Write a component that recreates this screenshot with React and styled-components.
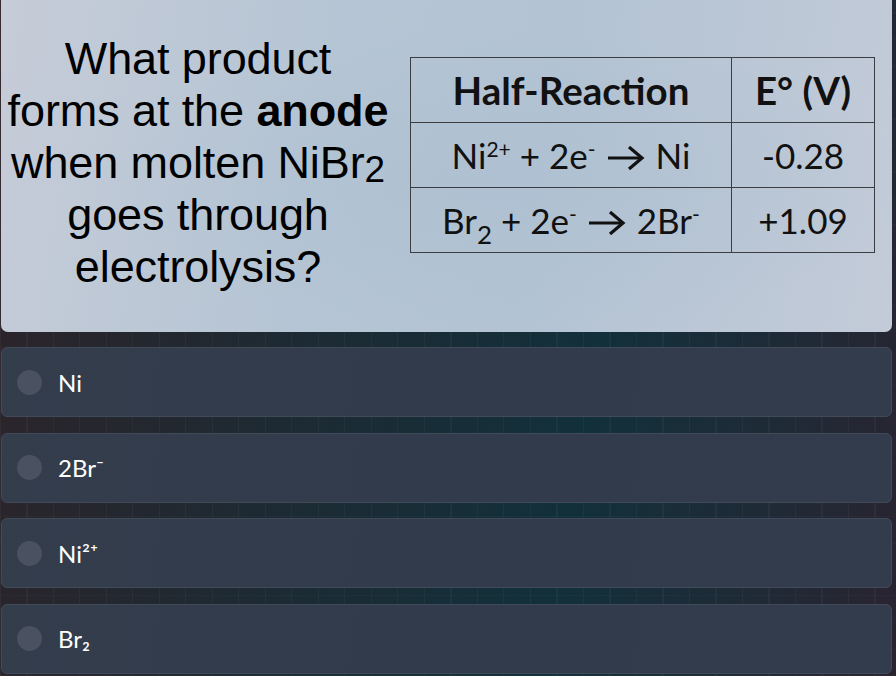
import React from 'react'
import styled, { createGlobalStyle } from 'styled-components'

const GlobalStyle = createGlobalStyle`
  html, body {
    margin: 0;
    padding: 0;
  }
  body {
    width: 896px;
    height: 676px;
    overflow: hidden;
    background-color: #1a2a33;
    background-image:
      repeating-linear-gradient(90deg, rgba(255,255,255,0.035) 0 1px, transparent 1px 26.5px),
      repeating-linear-gradient(0deg, rgba(255,255,255,0.02) 0 1px, transparent 1px 26.5px),
      linear-gradient(100deg, #2e2329 0%, #1d2a33 35%, #12303a 65%, #1f2a36 85%, #2a2330 100%);
  }
`

const Page = styled.div`
  padding: 0 4px 0 1px;
`

const QuestionCard = styled.div`
  height: 332px;
  box-sizing: border-box;
  border-radius: 0 0 7px 7px;
  background:
    radial-gradient(ellipse at 55% 55%, rgba(170, 190, 208, 0.55), transparent 60%),
    linear-gradient(100deg, #c6ccd8 0%, #b6c5d4 35%, #b3c3d3 60%, #c3cbd8 100%);
  display: flex;
  align-items: flex-start;
`

const Prompt = styled.div`
  width: 394px;
  flex: none;
  margin-top: 33px;
  text-align: center;
  font-family: 'Liberation Sans', Arial, sans-serif;
  font-size: 45px;
  line-height: 52px;
  letter-spacing: -0.1px;
  color: #000;

  b {
    font-weight: 700;
  }
`

const PromptSub = styled.span`
  font-size: 0.82em;
  vertical-align: -0.1em;
  line-height: 0;
`

const ReactionTable = styled.table`
  margin: 57px 0 0 15px;
  border-collapse: collapse;
  font-family: Lato, 'Open Sans', sans-serif;
  color: #111;
`

const Cell = styled.td`
  border: 1.5px solid #3a3d42;
  height: 64px;
  padding: 0;
  text-align: center;
  font-size: ${p => (p.$head ? '38.5px' : '35px')};
  font-weight: ${p => (p.$head ? 700 : 400)};
  width: ${p => p.$w}px;
  white-space: nowrap;
`

const Sup = styled.sup`
  font-size: 0.6em;
  vertical-align: 0.55em;
  line-height: 0;
`

const Sub = styled.sub`
  font-size: 0.74em;
  vertical-align: -0.38em;
  line-height: 0;
`

const ArrowSvg = styled.svg`
  width: 38px;
  height: 24px;
  vertical-align: -1px;
  margin: 0 2px;
`

const Arrow = () => (
  <ArrowSvg viewBox="0 0 38 24" fill="none" stroke="#111" strokeWidth="3.2">
    <path d="M1 12H35" />
    <path d="M22 1L35 12L22 23" strokeLinejoin="miter" />
  </ArrowSvg>
)

const Options = styled.div`
  display: flex;
  flex-direction: column;
  gap: 15.5px;
  margin-top: 15px;
`

const Option = styled.div`
  height: 70px;
  box-sizing: border-box;
  border: 1px solid #414a59;
  border-radius: 6px;
  background: linear-gradient(100deg, #343d4c 0%, #313b4b 50%, #333c4c 100%);
  display: flex;
  align-items: center;
  padding-left: 15px;
  gap: 16px;
  font-family: Lato, 'Open Sans', sans-serif;
  font-size: 24px;
  color: #fff;
`

const Radio = styled.span`
  width: 25px;
  height: 25px;
  border-radius: 50%;
  background: #4a5161;
  flex: none;
`

const answers = ['Ni', '2Br⁻', 'Ni²⁺', 'Br₂']

export default function App() {
  return (
    <Page>
      <GlobalStyle />
      <QuestionCard>
        <Prompt>
          What product
          <br />
          forms at the <b>anode</b>
          <br />
          when molten NiBr<PromptSub>2</PromptSub>
          <br />
          goes through
          <br />
          electrolysis?
        </Prompt>
        <ReactionTable>
          <tbody>
            <tr>
              <Cell $head $w={320}>Half-Reaction</Cell>
              <Cell $head $w={142}>E° (V)</Cell>
            </tr>
            <tr>
              <Cell>
                Ni<Sup>2+</Sup> + 2e<Sup>-</Sup> <Arrow /> Ni
              </Cell>
              <Cell $w={142}>-0.28</Cell>
            </tr>
            <tr>
              <Cell>
                Br<Sub>2</Sub> + 2e<Sup>-</Sup> <Arrow /> 2Br<Sup>-</Sup>
              </Cell>
              <Cell $w={142}>+1.09</Cell>
            </tr>
          </tbody>
        </ReactionTable>
      </QuestionCard>
      <Options>
        {answers.map(a => (
          <Option key={a}>
            <Radio />
            <span>{a}</span>
          </Option>
        ))}
      </Options>
    </Page>
  )
}
